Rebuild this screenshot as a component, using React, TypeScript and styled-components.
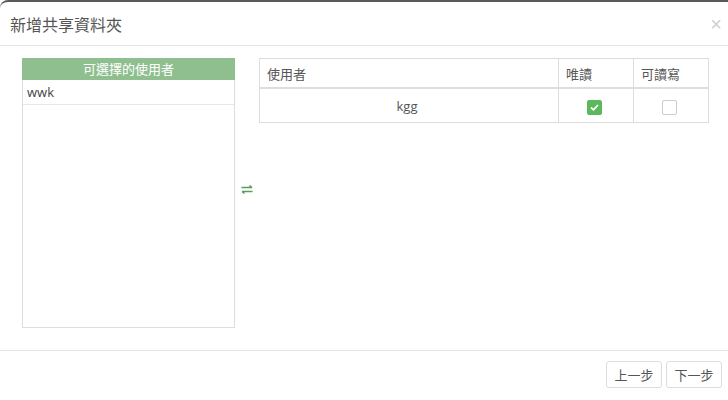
import styled, { createGlobalStyle } from 'styled-components';

const GlobalStyle = createGlobalStyle`
  html, body {
    margin: 0;
    padding: 0;
    background: #fff;
  }
  body {
    font-family: "Open Sans", "Noto Sans CJK TC", sans-serif;
    font-size: 13px;
    color: #555;
  }
`;

const Modal = styled.div`
  width: 728px;
  height: 400px;
  box-sizing: border-box;
  border-top: 2px solid #5a5a5a;
  border-top-left-radius: 8px;
  display: flex;
  flex-direction: column;
  background: #fff;
`;

const Header = styled.div`
  height: 44px;
  box-sizing: border-box;
  display: flex;
  align-items: center;
  justify-content: space-between;
  padding: 0 6px 0 10px;
  border-bottom: 1px solid #e5e5e5;
`;

const Title = styled.h4`
  margin: 0;
  font-size: 16px;
  font-weight: 400;
  color: #555;
  font-family: "Noto Sans CJK TC", sans-serif;
`;

const Close = styled.span`
  font-size: 20px;
  color: #cfcfcf;
  line-height: 1;
  font-family: "Liberation Sans", sans-serif;
`;

const Body = styled.div`
  display: flex;
  align-items: stretch;
  padding: 12px 19px 22px 22px;
  height: 304px;
  box-sizing: border-box;
`;

const UserPanel = styled.div`
  width: 213px;
  border: 1px solid #ddd;
  border-top: none;
  box-sizing: border-box;
  display: flex;
  flex-direction: column;
`;

const PanelHead = styled.div`
  background: #8fbf8f;
  color: #fff;
  text-align: center;
  height: 22px;
  line-height: 22px;
  margin: 0 -1px;
  font-family: "Noto Sans CJK TC", sans-serif;
`;

const UserRow = styled.div`
  height: 25px;
  line-height: 24px;
  padding: 0 4px;
  border-bottom: 1px solid #e8e8e8;
  box-sizing: border-box;
  color: #444;
`;

const SwapCol = styled.div`
  width: 24px;
  display: flex;
  align-items: center;
  justify-content: center;
  padding-bottom: 8px;
`;

const Table = styled.table`
  flex: 1;
  align-self: flex-start;
  border-collapse: collapse;
  border: 1px solid #ddd;
`;

const Th = styled.th<{ $w?: number }>`
  text-align: left;
  font-weight: 400;
  height: 28px;
  padding: 0 7px;
  border: 1px solid #ddd;
  border-bottom-width: 2px;
  width: ${(p) => (p.$w ? `${p.$w}px` : 'auto')};
  font-family: "Noto Sans CJK TC", sans-serif;
  color: #555;
`;

const Td = styled.td`
  text-align: center;
  height: 33px;
  border: 1px solid #ddd;
  color: #555;
  padding: 0 4px 0 0;
`;

const Check = styled.span<{ $on?: boolean }>`
  display: inline-flex;
  align-items: center;
  justify-content: center;
  width: 15px;
  height: 15px;
  border-radius: 2px;
  box-sizing: border-box;
  vertical-align: middle;
  background: ${(p) => (p.$on ? '#5cb85c' : '#fff')};
  border: 1px solid ${(p) => (p.$on ? '#5cb85c' : '#ccc')};
`;

const Footer = styled.div`
  margin-top: auto;
  height: 50px;
  box-sizing: border-box;
  border-top: 1px solid #e5e5e5;
  display: flex;
  justify-content: flex-end;
  align-items: center;
  gap: 4px;
  padding: 0 6px 2px 0;
`;

const Button = styled.button`
  height: 27px;
  width: 56px;
  padding: 0;
  background: #fff;
  border: 1px solid #ddd;
  border-radius: 3px;
  color: #555;
  font-size: 13px;
  font-family: "Noto Sans CJK TC", sans-serif;
`;

export default function App() {
  return (
    <>
      <GlobalStyle />
      <Modal>
        <Header>
          <Title>新增共享資料夾</Title>
          <Close>×</Close>
        </Header>
        <Body>
          <UserPanel>
            <PanelHead>可選擇的使用者</PanelHead>
            <UserRow>wwk</UserRow>
          </UserPanel>
          <SwapCol>
            <svg width="12" height="9" viewBox="0 0 12 9" fill="none" stroke="#5a9a5a" strokeWidth="1.4">
              <path d="M0.5 2.5H11M8.5 0.5L11 2.5" />
              <path d="M11.5 6.5H1M3.5 8.5L1 6.5" />
            </svg>
          </SwapCol>
          <Table>
            <thead>
              <tr>
                <Th>使用者</Th>
                <Th $w={60}>唯讀</Th>
                <Th $w={60}>可讀寫</Th>
              </tr>
            </thead>
            <tbody>
              <tr>
                <Td>kgg</Td>
                <Td>
                  <Check $on>
                    <svg width="9" height="7" viewBox="0 0 9 7" fill="none" stroke="#fff" strokeWidth="1.8">
                      <path d="M1 3.5L3.5 5.8L8 1" />
                    </svg>
                  </Check>
                </Td>
                <Td>
                  <Check />
                </Td>
              </tr>
            </tbody>
          </Table>
        </Body>
        <Footer>
          <Button>上一步</Button>
          <Button>下一步</Button>
        </Footer>
      </Modal>
    </>
  );
}
